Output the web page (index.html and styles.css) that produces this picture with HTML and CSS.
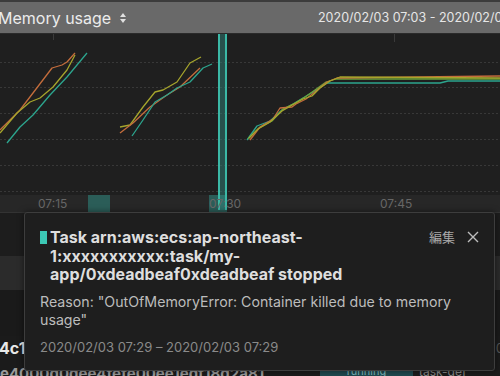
FILE: index.html
```html
<!DOCTYPE html>
<html lang="ja">
<head>
<meta charset="UTF-8">
<meta name="viewport" content="width=device-width, initial-scale=1.0">
<title>Memory usage</title>
<link rel="stylesheet" href="styles.css">
</head>
<body>
<div class="page">
  <div class="header">
    <div class="title-group">
      <span class="title">Memory usage</span>
      <svg class="sort" width="6" height="10" viewBox="0 0 6 10"><path d="M3 0 L6 4 H0 Z M3 10 L6 6 H0 Z" fill="#e0e0e0"/></svg>
    </div>
    <div class="range">2020/02/03 07:03 - 2020/02/03 07:58</div>
  </div>

  <div class="chart">
    <svg class="plot" width="500" height="161" viewBox="0 34 500 161">
      <g stroke="#383838" stroke-width="1" stroke-dasharray="2 2">
        <line x1="0" y1="62.5" x2="500" y2="62.5"/>
        <line x1="0" y1="87.5" x2="500" y2="87.5"/>
        <line x1="0" y1="113.5" x2="500" y2="113.5"/>
        <line x1="0" y1="139.5" x2="500" y2="139.5"/>
        <line x1="0" y1="165.5" x2="500" y2="165.5"/>
        <line x1="0" y1="191.5" x2="500" y2="191.5"/>
      </g>
      <line x1="394.5" y1="34" x2="394.5" y2="42" stroke="#3a3a3a"/>
      <line x1="53.5" y1="34" x2="53.5" y2="40" stroke="#3a3a3a"/>
      <g fill="none" stroke-width="1.3" stroke-linejoin="round">
        <!-- first run -->
        <polyline stroke="#c46d3c" points="0,130 20,110 33,93 52,68 62,65 67,62 75,53"/>
        <polyline stroke="#a6a52c" points="0,133 17,113 30,102 40,98 53,87 67,70 75,55"/>
        <polyline stroke="#2ca58e" points="7,143 20,127 33,115 50,95 67,77 87,53"/>
        <!-- second run -->
        <polyline stroke="#a6a52c" points="120,127 130,125 143,107 155,92 163,90 177,82 190,63 201,57"/>
        <polyline stroke="#c46d3c" points="120,133 133,123 150,107 167,95 180,87 200,68"/>
        <polyline stroke="#2ca58e" points="132,136 143,120 155,102 167,95 177,88 190,82 203,68 212,64"/>
        <!-- third run -->
        <polyline stroke="#2ca58e" points="247,140 257,126 270,121 282,110 293,104 303,98 313,92 327,83 440,83 448,81 500,81"/>
        <polyline stroke="#6aa23a" points="248,139 259,128 272,121 283,109 295,103 305,97 315,90 326,82 336,79 500,79"/>
        <polyline stroke="#c46d3c" points="250,140 260,127 273,119 280,108 292,107 296,104 306,99 316,91 327,82 337,78 500,76"/>
        <polyline stroke="#a6a52c" points="249,138 258,129 270,122 282,111 294,104 303,99 312,96 320,88 330,81 340,77 500,78"/>
      </g>
    </svg>
    <div class="axis">
      <span class="tick" style="left: 38px">07:15</span>
      <span class="tick" style="left: 209px">07:30</span>
      <span class="tick" style="left: 380px">07:45</span>
      <span class="event" style="left: 88px; width: 22px"></span>
      <span class="event" style="left: 209px; width: 18px"></span>
    </div>
    <div class="marker"></div>
  </div>

  <div class="table">
    <div class="row row-a"></div>
    <div class="row row-b"></div>
    <div class="row row-c"></div>
    <div class="row row-d"><span class="task-id">4c1d9b2e</span><span class="row-end">0</span></div>
    <div class="row row-e">
      <span class="task-sub">e4000d0dee4fefe00ee1edf18d2a81</span>
      <span class="status">running</span>
      <span class="def">task-def</span>
    </div>
  </div>

  <div class="popup">
    <div class="pop-head">
      <span class="mark"></span>
      <div class="pop-title">Task arn:aws:ecs:ap-northeast-1:xxxxxxxxxxx:task/my-app/0xdeadbeaf0xdeadbeaf stopped</div>
      <span class="edit">編集</span>
      <svg class="close" width="12" height="12" viewBox="0 0 12 12"><path d="M1 1 L11 11 M11 1 L1 11" stroke="#bdbdbd" stroke-width="1.4"/></svg>
    </div>
    <div class="reason">Reason: "OutOfMemoryError: Container killed due to memory usage"</div>
    <div class="when">2020/02/03 07:29 – 2020/02/03 07:29</div>
  </div>
</div>
</body>
</html>
```

FILE: styles.css
```css
body {
  margin: 0;
  background-color: #1b1b1b;
  font-family: Inter, "Noto Sans CJK JP", sans-serif;
  overflow: hidden;
}
.page {
  position: relative; /* the popup sits over the table */
  width: 500px;
  height: 376px;
  overflow: hidden;
}
.header {
  display: grid;
  grid-template-columns: 318px 1fr;
  align-items: center;
  height: 31px;
  border-top: 2px solid #3c3c3c;
  border-bottom: 1px solid #2a2a2a;
  background-color: #696969;
  overflow: hidden;
}
.title-group {
  display: flex;
  align-items: center;
  gap: 9px;
  margin-left: -2px;
}
.title {
  color: #ececec;
  font-size: 16px;
}
.range {
  color: #e6e6e6;
  font-size: 12.5px;
  white-space: nowrap;
}
.chart {
  position: relative;
  background-color: #1f1f1f;
}
.plot {
  display: block;
}
.axis {
  position: relative;
  height: 17px;
  background-color: #272727;
}
.tick {
  position: absolute;
  top: 1px;
  color: #666;
  font-size: 12px;
  z-index: 1;
}
.event {
  position: absolute;
  top: 0;
  height: 17px;
  background-color: rgba(48, 160, 148, 0.45);
}
.marker {
  position: absolute;
  left: 218px;
  top: 0;
  width: 5px;
  height: 176px;
  border-left: 2px solid #3bb8a6;
  border-right: 2px solid #3bb8a6;
  background-color: rgba(48, 140, 130, 0.45);
}
.table {
  border-top: 1px solid #333;
}
.row {
  display: flex;
  align-items: center;
  white-space: nowrap;
}
.row-a {
  height: 43px;
  background-color: #1d1d1d;
}
.row-b {
  height: 34px;
  background-color: #2b2b2b;
}
.row-c {
  height: 46px;
  background-color: #1a1a1a;
}
.row-d {
  height: 24px;
  justify-content: space-between;
}
.task-id {
  color: #e8e8e8;
  font-weight: 700;
  font-size: 16px;
  margin-left: -1px;
}
.row-end {
  color: #555;
  font-size: 13px;
  margin-right: -4px;
}
.row-e {
  height: 20px;
  align-items: flex-start;
  gap: 6px;
}
.task-sub {
  color: #9a9a9a;
  font-weight: 700;
  font-size: 15px;
  margin-top: 4px;
  width: 314px;
  overflow: hidden;
}
.status {
  width: 93px;
  height: 14px;
  margin-top: 4px;
  background-color: #1f4a50;
  color: #7fb8bd;
  font-size: 11px;
  text-align: center;
}
.def {
  color: #888;
  font-size: 12px;
  margin-top: 4px;
}
.popup {
  position: absolute;
  left: 24px;
  top: 212px;
  width: 439px;
  height: 128px;
  padding: 15px 15px 14px 15px;
  border: 1px solid #3d3d3d;
  border-radius: 3px;
  background-color: #1e1e1e;
  box-shadow: 0 0 6px rgba(0, 0, 0, 0.5);
}
.pop-head {
  display: flex;
  align-items: flex-start;
}
.mark {
  flex: none;
  width: 7px;
  height: 13px;
  margin: 3px 3px 0 0;
  background-color: #3cc8b4;
}
.pop-title {
  flex: 1;
  color: #dedede;
  font-size: 16px;
  font-weight: 700;
  line-height: 18.5px;
  padding-right: 30px;
}
.edit {
  flex: none;
  color: #a8a8a8;
  font-size: 13px;
  line-height: 18px;
  margin-right: 12px;
}
.close {
  flex: none;
  margin: 3px 0 0 0;
}
.reason {
  margin-top: 9px;
  color: #bcbcbc;
  font-size: 14.2px;
  line-height: 18.5px;
}
.when {
  margin-top: 9px;
  color: #8a8a8a;
  font-size: 13px;
}
```
